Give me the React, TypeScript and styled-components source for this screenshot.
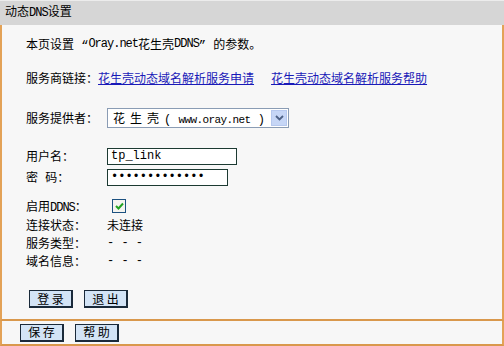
import React from "react";
import styled, { createGlobalStyle } from "styled-components";

const GlobalStyle = createGlobalStyle`
  html, body {
    margin: 0;
    padding: 0;
    background: #ffffff;
  }
  body {
    font-family: "Liberation Mono", "Noto Sans CJK SC", monospace;
    font-size: 12px;
    color: #000000;
  }
`;

const Frame = styled.div`
  width: 504px;
  height: 346px;
  display: flex;
  flex-direction: column;
  background: #ffffff;
`;

const Header = styled.div`
  height: 24px;
  line-height: 24px;
  padding-left: 5px;
  background: #d6d6d6;
  border-top: 1px solid #ececec;
  font-size: 12px;
`;

const Main = styled.div`
  display: flex;
  flex-direction: column;
  background: #f7f7f7;
  border-left: 2px solid #e3a257;
  border-right: 2px solid #e3a257;
  border-bottom: 2px solid #d9984c;
  padding: 10px 0 11px 24px;
`;

const Row = styled.div<{ $h?: number; $gap?: number }>`
  display: flex;
  align-items: center;
  height: ${(p) => p.$h ?? 18}px;
  margin-top: ${(p) => p.$gap ?? 0}px;
  white-space: nowrap;
`;

const Label = styled.span`
  width: 81px;
  flex-shrink: 0;
`;

const Latin = styled.span`
  letter-spacing: -1px;
`;

const Link = styled.a<{ $gap?: number }>`
  color: #1a1ab8;
  text-decoration: underline;
  margin-left: ${(p) => p.$gap ?? 0}px;
  cursor: pointer;
`;

const Select = styled.div`
  width: 182px;
  height: 20px;
  border: 1px solid #8a9cb4;
  background: #ffffff;
  display: flex;
  align-items: center;
  box-sizing: border-box;
  padding: 1px;
`;

const SelectText = styled.span`
  flex: 1;
  padding-left: 4px;
  overflow: hidden;
`;

const Wide = styled.span`
  font-family: "Noto Sans CJK SC", sans-serif;
  letter-spacing: 5px;
`;

const Small = styled.span`
  font-size: 11px;
  letter-spacing: -0.6px;
`;

const Arrow = styled.span`
  width: 16px;
  height: 16px;
  flex-shrink: 0;
  background: #c6d6f6;
  border: 1px solid #b6c8ee;
  box-sizing: border-box;
  display: flex;
  align-items: center;
  justify-content: center;
`;

const TextBox = styled.input<{ $w: number }>`
  width: ${(p) => p.$w}px;
  height: 17px;
  box-sizing: border-box;
  border: 1px solid #1c3a32;
  background: #ffffff;
  padding: 0 3px;
  font-family: "Liberation Mono", monospace;
  font-size: 12px;
  outline: none;
`;

const Check = styled.span`
  width: 12px;
  height: 12px;
  margin-left: 5px;
  border: 1px solid #1c5180;
  background: #f4f4f0;
  display: flex;
  align-items: center;
  justify-content: center;
`;

const Button = styled.button`
  width: 44px;
  height: 18px;
  padding: 0;
  border: 1px solid #1a2a3a;
  border-right-width: 2px;
  border-bottom-width: 2px;
  background: #d3e4f6;
  font-family: "Noto Sans CJK SC", sans-serif;
  font-size: 12px;
  line-height: 14px;
  white-space: nowrap;
  color: #000;
  cursor: pointer;
`;

const Buttons = styled.div<{ $gap?: number }>`
  display: flex;
  gap: 11px;
  margin-top: ${(p) => p.$gap ?? 0}px;
  padding-left: 3px;
`;

const Footer = styled.div`
  height: 24px;
  display: flex;
  align-items: center;
  gap: 11px;
  padding-left: 18px;
  background: #f7f7f7;
  border-left: 2px solid #e3a257;
  border-right: 2px solid #e3a257;
  border-bottom: 2px solid #d9984c;
`;

export default function App() {
  return (
    <Frame>
      <GlobalStyle />
      <Header>
        动态<Latin>DNS</Latin>设置
      </Header>
      <Main>
        <Row>
          本页设置 “<Latin>Oray.net</Latin>花生壳<Latin>DDNS</Latin>” 的参数。
        </Row>
        <Row $gap={16}>
          <span>服务商链接：</span>
          <Link>花生壳动态域名解析服务申请</Link>
          <Link $gap={17}>花生壳动态域名解析服务帮助</Link>
        </Row>
        <Row $h={22} $gap={20}>
          <Label>服务提供者：</Label>
          <Select>
            <SelectText>
              <Wide>花生壳</Wide>( <Small>www.oray.net</Small> )
            </SelectText>
            <Arrow>
              <svg width="9" height="6" viewBox="0 0 9 6">
                <path d="M1 1 L4.5 4.5 L8 1" fill="none" stroke="#4d6185" strokeWidth="1.8" />
              </svg>
            </Arrow>
          </Select>
        </Row>
        <Row $h={20} $gap={17}>
          <Label>用户名：</Label>
          <TextBox $w={130} defaultValue="tp_link" />
        </Row>
        <Row $h={20} $gap={1}>
          <Label>密 码：</Label>
          <TextBox $w={121} type="password" defaultValue="1234567890123" />
        </Row>
        <Row $h={20} $gap={9}>
          <Label>
            启用<Latin>DDNS</Latin>：
          </Label>
          <Check>
            <svg width="9" height="8" viewBox="0 0 9 8">
              <path d="M1 4 L3.5 6.5 L8 1.5" fill="none" stroke="#22a322" strokeWidth="2" />
            </svg>
          </Check>
        </Row>
        <Row>
          <Label>连接状态：</Label>
          <span>未连接</span>
        </Row>
        <Row>
          <Label>服务类型：</Label>
          <span>- - -</span>
        </Row>
        <Row>
          <Label>域名信息：</Label>
          <span>- - -</span>
        </Row>
        <Buttons $gap={20}>
          <Button>登 录</Button>
          <Button>退 出</Button>
        </Buttons>
      </Main>
      <Footer>
        <Button>保 存</Button>
        <Button>帮 助</Button>
      </Footer>
    </Frame>
  );
}
